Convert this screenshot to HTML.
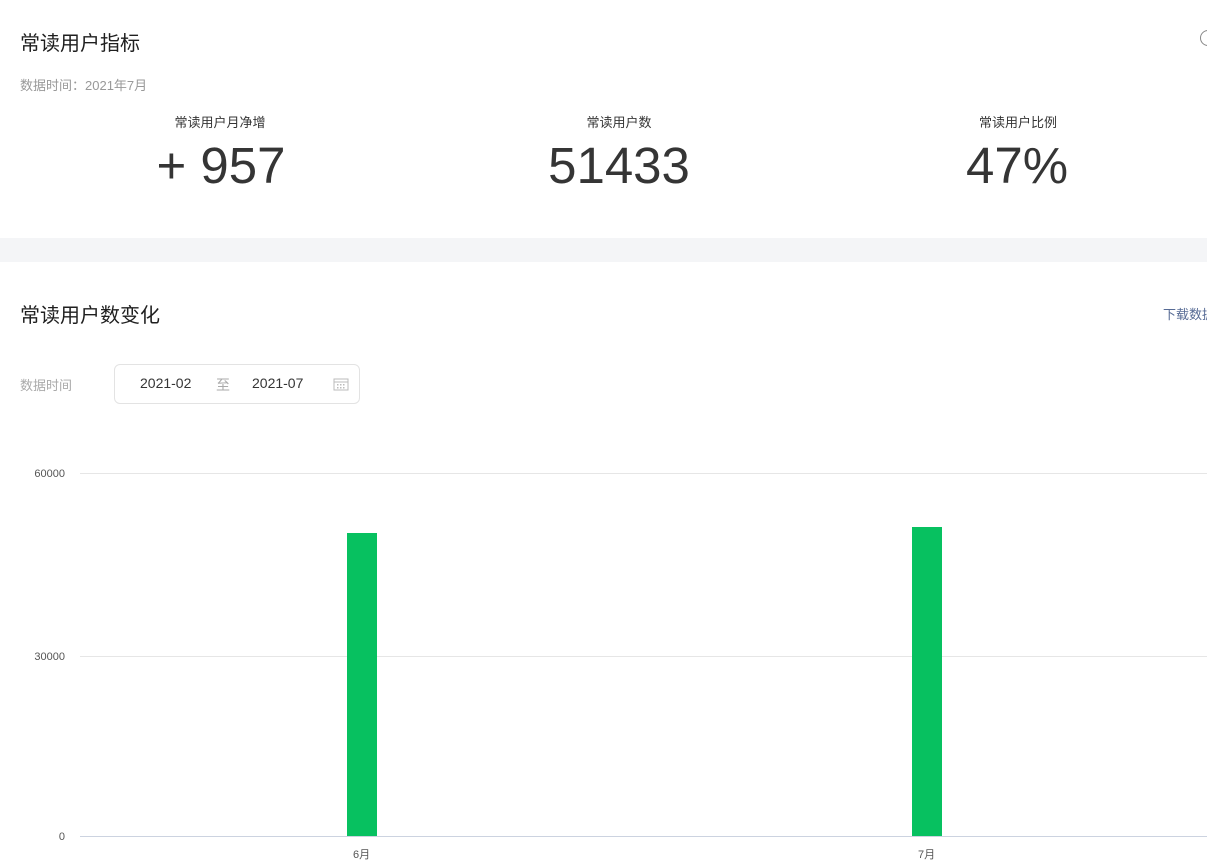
<!DOCTYPE html>
<html><head><meta charset="utf-8"><style>
*{margin:0;padding:0;box-sizing:border-box}
body{width:1207px;height:868px;overflow:hidden;background:#fff;font-family:"Liberation Sans","Noto Sans CJK SC",sans-serif;color:#353535;position:relative}
.a{position:absolute;white-space:nowrap}
.t{font-size:20px;color:#1f1f1f}
.lab{font-size:13px;color:#353535;transform:translateX(-50%)}
.num{font-size:51px;color:#353535;transform:translateX(-50%);line-height:1}
.g{position:absolute;left:80px;right:0;height:1px;background:#e6e6e6}
.y{font-size:11px;color:#555;text-align:right;width:45px;left:20px}
.bar{position:absolute;background:#07c160;width:30px}
</style></head><body>
<div class="a t" style="left:20px;top:27px">常读用户指标</div>
<div class="a" style="left:1200px;top:30px;width:16px;height:16px;border:1px solid #888;border-radius:50%"></div>
<div class="a" style="left:20px;top:75px;font-size:13px;color:#999">数据时间：2021年7月</div>
<div class="a lab" style="left:220px;top:112px">常读用户月净增</div>
<div class="a lab" style="left:619px;top:112px">常读用户数</div>
<div class="a lab" style="left:1018px;top:112px">常读用户比例</div>
<div class="a num" style="left:221px;top:140px">+ 957</div>
<div class="a num" style="left:619px;top:140px">51433</div>
<div class="a num" style="left:1017px;top:140px">47%</div>
<div class="a" style="left:0;top:238px;width:1207px;height:24px;background:#f4f5f7"></div>
<div class="a t" style="left:20px;top:299px">常读用户数变化</div>
<div class="a" style="left:1163px;top:304px;font-size:13px;color:#576b95">下载数据</div>
<div class="a" style="left:20px;top:375px;font-size:13px;color:#aaa">数据时间</div>
<div class="a" style="left:114px;top:364px;width:246px;height:40px;border:1px solid #e3e3e3;border-radius:6px"></div>
<div class="a" style="left:140px;top:375px;font-size:14px;color:#353535">2021-02</div>
<div class="a" style="left:216px;top:375px;font-size:14px;color:#aaa">至</div>
<div class="a" style="left:252px;top:375px;font-size:14px;color:#353535">2021-07</div>
<svg class="a" style="left:333px;top:377px" width="16" height="14" viewBox="0 0 16 14"><rect x="1" y="2" width="14" height="11" fill="none" stroke="#bbb"/><line x1="1" y1="5" x2="15" y2="5" stroke="#bbb"/><g fill="#bbb"><rect x="4" y="7" width="1.5" height="1.5"/><rect x="7" y="7" width="1.5" height="1.5"/><rect x="10" y="7" width="1.5" height="1.5"/><rect x="4" y="10" width="1.5" height="1.5"/><rect x="7" y="10" width="1.5" height="1.5"/><rect x="10" y="10" width="1.5" height="1.5"/></g></svg>
<div class="g" style="top:473px"></div>
<div class="g" style="top:656px"></div>
<div class="g" style="top:836px;background:#ccd3e0"></div>
<div class="a y" style="top:468px">60000</div>
<div class="a y" style="top:651px">30000</div>
<div class="a y" style="top:831px">0</div>
<div class="bar" style="left:347px;top:533px;height:303px"></div>
<div class="bar" style="left:912px;top:527px;height:309px"></div>
<div class="a" style="left:353px;top:846px;font-size:11px;color:#555">6月</div>
<div class="a" style="left:918px;top:846px;font-size:11px;color:#555">7月</div>
</body></html>
